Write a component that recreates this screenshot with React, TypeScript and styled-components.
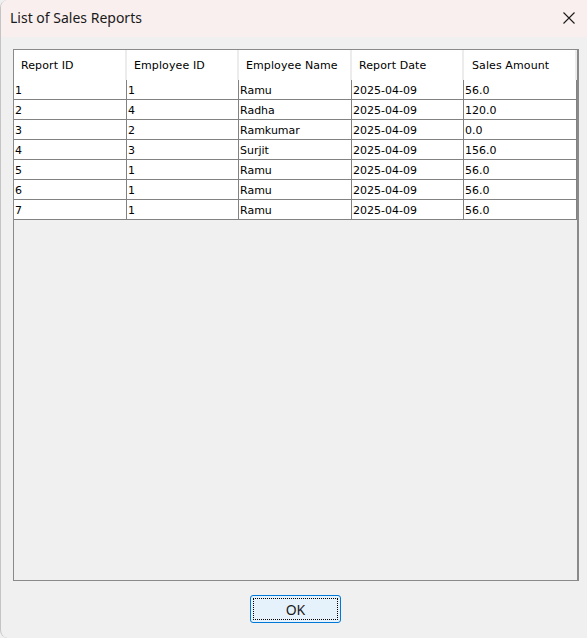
import React from "react";
import styled, { createGlobalStyle } from "styled-components";

const Global = createGlobalStyle`
  html, body { margin: 0; padding: 0; background: #f0f0f0; }
  #root { width: 587px; height: 638px; }
`;

const Window = styled.div`
  width: 587px;
  height: 638px;
  display: flex;
  flex-direction: column;
  background: #f0f0f0;
  border-left: 1px solid #c4c4c4;
  border-radius: 8px 0 0 8px;
  box-sizing: border-box;
  overflow: hidden;
`;

const TitleBar = styled.div`
  height: 37px;
  flex: none;
  display: flex;
  align-items: center;
  justify-content: space-between;
  background: #f9efee;
  padding: 0 12px 0 9px;
  font-family: "Noto Sans", "Open Sans", sans-serif;
  font-size: 14px;
  color: #1a1a1a;
`;

const Title = styled.span`
  padding-bottom: 2px;
`;

const CloseBtn = styled.div`
  width: 12px;
  height: 12px;
  display: flex;
  margin-top: -1px;
`;

const Body = styled.div`
  flex: 1;
  display: flex;
  flex-direction: column;
  padding: 12px 9px 0 12px;
  min-height: 0;
`;

const Frame = styled.div`
  height: 532px;
  box-sizing: border-box;
  border: 1px solid #8a8a8a;
  border-right: 2px solid #8a8a8a;
  background: #f0f0f0;
  width: 566px;
`;

const Grid = styled.div`
  display: grid;
  grid-template-columns: 113px 112px 113px 112px 113px;
  width: 563px;
  font-family: "DejaVu Sans", Tahoma, sans-serif;
  font-size: 11px;
  color: #000;
`;

const HeadCell = styled.div<{ $last?: boolean }>`
  height: 30px;
  background: #fff;
  display: flex;
  align-items: center;
  padding-left: ${(p) => (p.$last ? "8px" : "7px")};
  padding-top: 1px;
  box-sizing: border-box;
  border-right: 2px solid #ececec;
  letter-spacing: 0.1px;
`;

const Cell = styled.div`
  height: 20px;
  background: #fff;
  display: flex;
  align-items: center;
  padding-left: 1px;
  padding-top: 1px;
  box-sizing: border-box;
  border-right: 1px solid #828282;
  border-bottom: 1px solid #828282;
  white-space: nowrap;
  overflow: hidden;
`;

const ButtonRow = styled.div`
  display: flex;
  justify-content: center;
  padding-top: 14px;
`;

const OkButton = styled.button`
  width: 91px;
  height: 28px;
  border: 1px solid #0078d7;
  border-radius: 3px;
  background: #e5f1fb;
  padding: 2px;
  box-sizing: border-box;
  font-family: "Noto Sans", "Open Sans", sans-serif;
  font-size: 14px;
  color: #1a1a1a;
  display: flex;
`;

const Focus = styled.span`
  flex: 1;
  border: 1px dotted #000;
  display: flex;
  align-items: center;
  justify-content: center;
`;

const headers = ["Report ID", "Employee ID", "Employee Name", "Report Date", "Sales Amount"];
const rows = [
  ["1", "1", "Ramu", "2025-04-09", "56.0"],
  ["2", "4", "Radha", "2025-04-09", "120.0"],
  ["3", "2", "Ramkumar", "2025-04-09", "0.0"],
  ["4", "3", "Surjit", "2025-04-09", "156.0"],
  ["5", "1", "Ramu", "2025-04-09", "56.0"],
  ["6", "1", "Ramu", "2025-04-09", "56.0"],
  ["7", "1", "Ramu", "2025-04-09", "56.0"],
];

export default function App() {
  return (
    <>
      <Global />
      <Window>
        <TitleBar>
          <Title>List of Sales Reports</Title>
          <CloseBtn>
            <svg width="12" height="12" viewBox="0 0 12 12">
              <path d="M0.5 0.5 L11.5 11.5 M11.5 0.5 L0.5 11.5" stroke="#1a1a1a" strokeWidth="1.1" fill="none" />
            </svg>
          </CloseBtn>
        </TitleBar>
        <Body>
          <Frame>
            <Grid>
              {headers.map((h, i) => (
                <HeadCell key={h} $last={i === 4}>{h}</HeadCell>
              ))}
              {rows.map((r, ri) =>
                r.map((c, ci) => <Cell key={ri + "-" + ci}>{c}</Cell>)
              )}
            </Grid>
          </Frame>
          <ButtonRow>
            <OkButton>
              <Focus>OK</Focus>
            </OkButton>
          </ButtonRow>
        </Body>
      </Window>
    </>
  );
}
